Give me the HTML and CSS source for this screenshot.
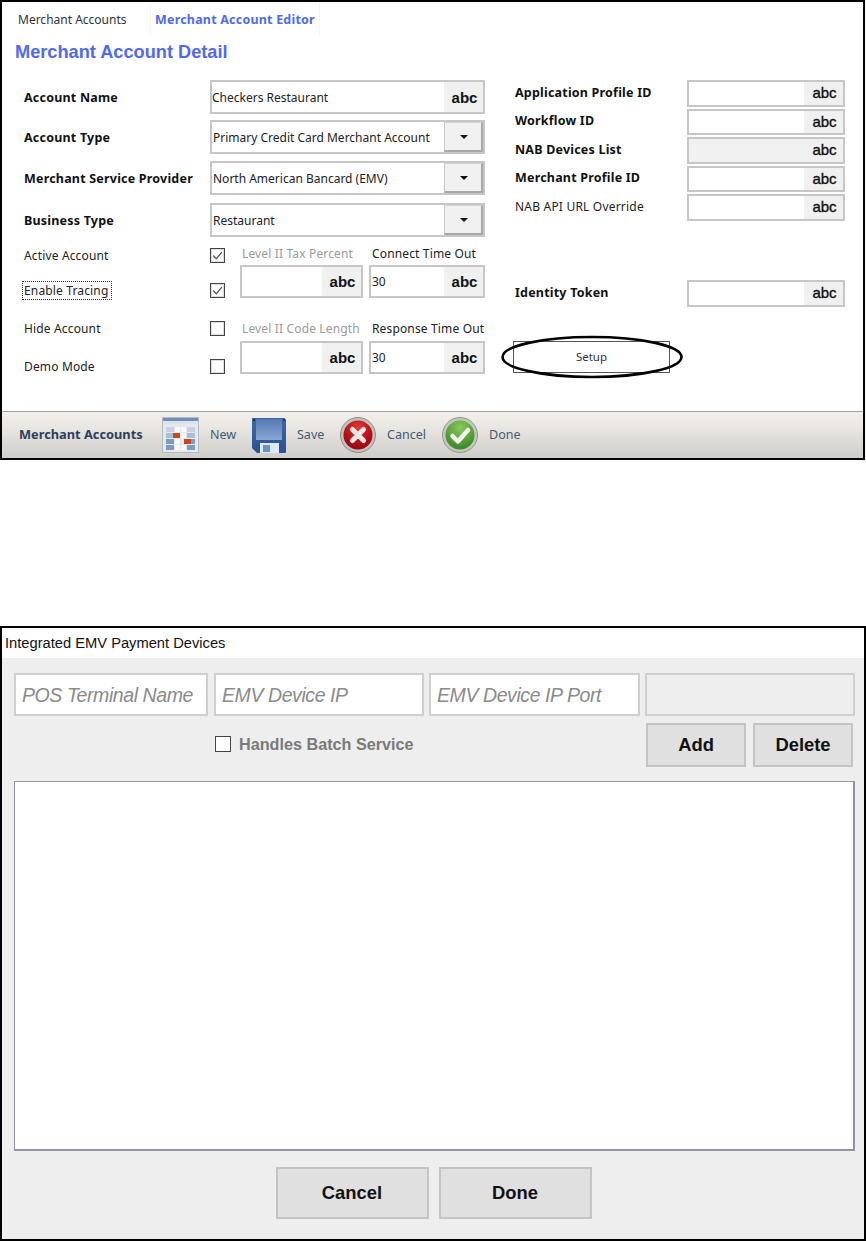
FILE: index.html
```html
<!DOCTYPE html>
<html lang="en">
<head>
<meta charset="utf-8">
<title>Merchant Account Detail</title>
<link rel="stylesheet" href="styles.css">
</head>
<body>
<section class="panel-top">
  <nav class="tabs">
    <div class="tab tab-first">Merchant Accounts</div>
    <div class="tab tab-active">Merchant Account Editor</div>
  </nav>
  <h1 class="heading">Merchant Account Detail</h1>
  <div class="form">
    <div class="left">
      <div class="row row-a"><span class="label bold">Account Name</span><div class="field"><span class="value">Checkers Restaurant</span><span class="tail abc">abc</span></div></div>
      <div class="row row-b"><span class="label bold">Account Type</span><div class="field"><span class="value wide">Primary Credit Card Merchant Account</span><span class="drop"><i class="caret"></i></span></div></div>
      <div class="row row-c"><span class="label bold">Merchant Service Provider</span><div class="field"><span class="value wide">North American Bancard (EMV)</span><span class="drop"><i class="caret"></i></span></div></div>
      <div class="row"><span class="label bold">Business Type</span><div class="field"><span class="value wide">Restaurant</span><span class="drop"><i class="caret"></i></span></div></div>
      <div class="lower">
        <div class="checks">
          <div class="check-row"><span class="label">Active Account</span><span class="box"><svg viewBox="0 0 15 15" class="tick"><path d="M2.5 7.5l3.6 3.8L12.5 3.6"/></svg></span></div>
          <div class="check-row"><span class="label-focus">Enable Tracing</span><span class="box"><svg viewBox="0 0 15 15" class="tick"><path d="M2.5 7.5l3.6 3.8L12.5 3.6"/></svg></span></div>
          <div class="check-row"><span class="label">Hide Account</span><span class="box"></span></div>
          <div class="check-row"><span class="label">Demo Mode</span><span class="box"></span></div>
        </div>
        <div class="small-fields">
          <div class="stack"><span class="cap muted">Level II Tax Percent</span><div class="field small"><span class="value"></span><span class="tail abc">abc</span></div></div>
          <div class="stack"><span class="cap">Connect Time Out</span><div class="field small"><span class="value">30</span><span class="tail abc">abc</span></div></div>
          <div class="stack"><span class="cap muted">Level II Code Length</span><div class="field small"><span class="value"></span><span class="tail abc">abc</span></div></div>
          <div class="stack"><span class="cap">Response Time Out</span><div class="field small"><span class="value">30</span><span class="tail abc">abc</span></div></div>
        </div>
      </div>
    </div>
    <div class="right">
      <div class="rrow"><span class="rlabel bold">Application Profile ID</span><div class="field"><span class="value"></span><span class="tail abc-r">abc</span></div></div>
      <div class="rrow"><span class="rlabel bold">Workflow ID</span><div class="field"><span class="value"></span><span class="tail abc-r">abc</span></div></div>
      <div class="rrow"><span class="rlabel bold">NAB Devices List</span><div class="field disabled"><span class="value"></span><span class="tail abc-r">abc</span></div></div>
      <div class="rrow"><span class="rlabel bold">Merchant Profile ID</span><div class="field"><span class="value"></span><span class="tail abc-r">abc</span></div></div>
      <div class="rrow"><span class="rlabel">NAB API URL Override</span><div class="field"><span class="value"></span><span class="tail abc-r">abc</span></div></div>
      <div class="rrow identity"><span class="rlabel bold">Identity Token</span><div class="field"><span class="value"></span><span class="tail abc-r">abc</span></div></div>
      <div class="setup">Setup
        <svg class="ring" viewBox="0 0 182 44"><ellipse cx="91" cy="22" rx="89.5" ry="20"/></svg>
      </div>
    </div>
  </div>
  <footer class="toolbar">
    <span class="tool-title">Merchant Accounts</span>
    <svg class="icon i-new" viewBox="0 0 37 36">
      <rect x=".5" y=".5" width="36" height="35" fill="#e6e8ec" stroke="#b4bac2"/>
      <rect x="1" y="1" width="35" height="3" fill="#6f8db6"/>
      <rect x="1" y="4" width="35" height="3" fill="#dbe2ec"/>
      <g fill="#7d9cc2">
        <rect x="4" y="10" width="8" height="5" fill="#c3d1e2"/><rect x="25" y="10" width="8" height="5" fill="#c3d1e2"/>
        <rect x="4" y="16" width="8" height="5" fill="#a9bed8"/><rect x="25" y="16" width="8" height="5" fill="#a9bed8"/>
        <rect x="4" y="22" width="8" height="5"/><rect x="25" y="22" width="8" height="5"/>
        <rect x="4" y="28" width="8" height="5"/><rect x="25" y="28" width="8" height="5"/>
      </g>
      <g fill="#f8f8f8">
        <rect x="13" y="10" width="5" height="5"/><rect x="19" y="10" width="5" height="5"/>
        <rect x="19" y="16" width="5" height="5"/><rect x="13" y="22" width="5" height="5"/>
        <rect x="13" y="28" width="5" height="5"/><rect x="19" y="28" width="5" height="5"/>
      </g>
      <rect x="11" y="16" width="7" height="5" fill="#c9481f"/>
      <rect x="22" y="22" width="7" height="5" fill="#c9481f"/>
    </svg>
    <span class="tool-label l-new">New</span>
    <svg class="icon i-save" viewBox="0 0 34 36">
      <defs>
        <linearGradient id="fl" x1="0" y1="0" x2="0" y2="1"><stop offset="0" stop-color="#3f66a3"/><stop offset="1" stop-color="#2c5296"/></linearGradient>
        <linearGradient id="fi" x1="0" y1="0" x2="0" y2="1"><stop offset="0" stop-color="#5479b2"/><stop offset="1" stop-color="#8aa6d2"/></linearGradient>
        <radialGradient id="rd" cx=".5" cy=".25" r=".8"><stop offset="0" stop-color="#e03a3c"/><stop offset=".6" stop-color="#b50f14"/><stop offset="1" stop-color="#8c0a0e"/></radialGradient>
        <radialGradient id="gr" cx=".5" cy=".25" r=".85"><stop offset="0" stop-color="#8ac85a"/><stop offset="1" stop-color="#2f7d22"/></radialGradient>
      </defs>
      <path d="M0 1h32.5l1.5 1.5V35a1 1 0 0 1-1 1H5l-5-5z" fill="url(#fl)"/>
      <rect x="4" y="2" width="26" height="21" fill="url(#fi)"/>
      <rect x="1" y="2" width="2" height="2" fill="#1d3560"/><rect x="31" y="2" width="2" height="2" fill="#1d3560"/>
      <path d="M8 26h19v10H8z" fill="#dfe7f3"/>
      <rect x="11" y="28" width="7" height="7" fill="#6f90c4"/>
    </svg>
    <span class="tool-label l-save">Save</span>
    <svg class="icon i-round" viewBox="0 0 36 36">
      <circle cx="18" cy="18" r="17.5" fill="#c2bfbc" stroke="#8f8c8a"/>
      <circle cx="18" cy="18" r="14.5" fill="url(#rd)"/>
      <path d="M12.5 12.5l11 11M23.5 12.5l-11 11" stroke="#efe6e6" stroke-width="5" stroke-linecap="round" fill="none"/>
    </svg>
    <span class="tool-label l-cancel">Cancel</span>
    <svg class="icon i-round" viewBox="0 0 36 36">
      <circle cx="18" cy="18" r="17.5" fill="#c2c8bd" stroke="#8e9689"/>
      <circle cx="18" cy="18" r="14.5" fill="url(#gr)"/>
      <path d="M10.5 19l5.5 5.5L26 13" stroke="#f2f5ee" stroke-width="4.5" stroke-linecap="round" stroke-linejoin="round" fill="none"/>
    </svg>
    <span class="tool-label">Done</span>
  </footer>
</section>

<section class="panel-bottom">
  <header class="title">Integrated EMV Payment Devices</header>
  <div class="body">
    <div class="inputs">
      <div class="input i1">POS Terminal Name</div>
      <div class="input i2">EMV Device IP</div>
      <div class="input i3">EMV Device IP Port</div>
      <div class="input i4 blank"></div>
    </div>
    <div class="actions">
      <label class="batch"><span class="bbox"></span>Handles Batch Service</label>
      <button class="btn add">Add</button>
      <button class="btn del">Delete</button>
    </div>
    <div class="list"></div>
    <div class="foot">
      <button class="btn big">Cancel</button>
      <button class="btn big">Done</button>
    </div>
  </div>
</section>
</body>
</html>
```
FILE: styles.css
```css
* { box-sizing: border-box; }
html, body { margin: 0; padding: 0; background: #fff; }
body { width: 866px; height: 1242px; overflow: hidden; font-family: "Noto Sans", "Liberation Sans", sans-serif; font-size: 12px; color: #222; }

.panel-top { width: 865px; height: 460px; border: 2px solid #000; display: flex; flex-direction: column; background: #fff; }
.tabs { display: flex; height: 34px; flex: none; }
.tab { line-height: 35px; font-size: 12px; color: #333; }
.tab-first { width: 148px; padding-left: 16px; }
.tab-active { width: 170px; padding-left: 4px; font-size: 12.5px; letter-spacing: .2px; font-weight: 700; color: #4f6bea; border-left: 1px solid #f6f6f6; border-right: 1px solid #f6f6f6; }
.heading { margin: 4px 0 16px 13px; height: 24px; font: 700 18.2px/24px "Liberation Sans", sans-serif; color: #4f6bea; }

.form { display: flex; padding-left: 22px; }
.left { width: 461px; flex: none; }
.right { width: 330px; margin-left: 30px; flex: none; display: flex; flex-direction: column; }

.row { display: flex; align-items: center; height: 34px; margin-bottom: 8px; }
.row-a { margin-bottom: 6px; }
.row-b { margin-bottom: 7px; }
.row-c { margin-bottom: 8px; }
.label { width: 186px; flex: none; font-size: 12px; letter-spacing: .15px; color: #222; }
.label.bold, .rlabel.bold { font-size: 12.5px; letter-spacing: .2px; font-weight: 700; color: #111; }
.row .field { flex: 1; height: 34px; }

.field { display: flex; align-items: stretch; border: 2px solid #c6c6c6; background: #fff; min-width: 0; }
.value { flex: 1; display: flex; align-items: center; font-size: 12px; color: #222; white-space: nowrap; overflow: hidden; }
.value.wide { padding-left: 1px; }
.tail { width: 39px; flex: none; display: flex; align-items: center; justify-content: center; padding-left: 2px; background: #f0f0f0; color: #111; font-family: "Liberation Sans", sans-serif; }
.abc { font-size: 15px; font-weight: 700; }
.abc-r { font-size: 15px; font-weight: 400; padding-bottom: 1px; -webkit-text-stroke: .35px #111; }
.disabled { background: #f0f0f0; }
.drop { width: 39px; flex: none; display: flex; align-items: center; justify-content: center; padding-left: 1px; background: #f0f0f0; border-style: solid; border-width: 1px 2px 2px 1px; border-color: #d4d4d4 #a8a8a8 #a8a8a8 #c8c8c8; }
.caret { width: 0; height: 0; border-left: 4px solid transparent; border-right: 4px solid transparent; border-top: 4px solid #111; }

.lower { display: flex; margin-top: 11px; }
.checks { width: 201px; flex: none; display: flex; flex-direction: column; gap: 23px; }
.check-row { display: flex; align-items: center; height: 15px; position: relative; }
.check-row:first-child { margin-bottom: -3px; }
.box { width: 15px; height: 15px; flex: none; border: 1px solid #444; box-shadow: inset 0 0 0 1px #ddd; background: #fff; }
.tick { display: block; width: 13px; height: 13px; }
.tick path { fill: none; stroke: #555; stroke-width: 1.5; }
.label-focus { width: 186px; flex: none; position: relative; letter-spacing: .15px; color: #222; }
.label-focus::after { content: ""; position: absolute; left: -2px; top: -1px; width: 88px; height: 17px; border: 1px dotted #333; }

.small-fields { display: grid; grid-template-columns: 123px 116px; column-gap: 6px; row-gap: 24px; margin-left: 15px; margin-top: -2px; }
.stack { display: flex; flex-direction: column; }
.cap { height: 19px; line-height: 16px; font-size: 12px; letter-spacing: .15px; color: #222; padding-left: 2px; white-space: nowrap; }
.stack:nth-child(n+3) .cap { line-height: 14px; }
.stack:nth-child(even) .cap { padding-left: 3px; }
.muted { color: #9a9a9a; }
.field.small { height: 33px; }
.small .value { padding-left: 1px; }

.rrow { display: flex; align-items: center; height: 26.5px; margin-bottom: 2px; }
.rrow .field { width: 158px; height: 26.5px; flex: none; }
.rlabel { width: 172px; flex: none; margin-top: -2px; font-size: 12px; letter-spacing: .2px; color: #222; }
.identity { margin-top: 57.5px; }
.setup { position: relative; width: 157px; height: 32px; margin: 32px 0 0 -2px; border: 1px solid #555; display: flex; align-items: center; justify-content: center; font-size: 11.5px; color: #333; }
.ring { position: absolute; left: -13px; top: -7px; width: 182px; height: 44px; overflow: visible; }
.ring ellipse { fill: none; stroke: #000; stroke-width: 2.6; }

.toolbar { margin-top: auto; height: 47px; flex: none; display: flex; align-items: center; padding-left: 17px; border-top: 1px solid #a0a0a0; background: linear-gradient(#f3f0ec, #e9e6e2 35%, #cfcdc9); }
.tool-title { width: 143px; flex: none; margin-top: -2px; font-size: 12.8px; font-weight: 700; color: #2d405e; }
.icon { flex: none; display: block; }
.i-new { width: 37px; height: 36px; }
.i-save { width: 34px; height: 36px; }
.i-round { width: 36px; height: 36px; }
.tool-label { flex: none; margin-left: 11px; margin-top: -2px; font-size: 12.5px; color: #445a72; }
.l-new { width: 31px; margin-right: 11px; }
.l-save { width: 32px; margin-right: 11px; }
.l-cancel { width: 44px; margin-right: 11px; }

.panel-bottom { width: 866px; height: 615px; margin-top: 166px; border: 2px solid #000; display: flex; flex-direction: column; font-family: "Liberation Sans", sans-serif; background: #eee; }
.title { height: 30px; flex: none; padding-left: 3px; background: #fff; color: #111; font-size: 14.7px; line-height: 30px; }
.body { flex: 1; padding: 15px 9px 0 12px; display: flex; flex-direction: column; }
.inputs { display: flex; height: 43px; flex: none; }
.input { height: 43px; border: 2px solid #cfcfcf; background: #fff; padding-left: 6px; font-style: italic; font-size: 19.5px; letter-spacing: -.42px; line-height: 40px; color: #8a8a8a; white-space: nowrap; overflow: hidden; }
.i1 { width: 194px; margin-right: 6px; }
.i2 { width: 210px; margin-right: 5px; }
.i3 { width: 211px; margin-right: 5px; }
.i4 { width: 210px; }
.blank { background: #eee; }
.actions { display: flex; height: 44px; flex: none; margin-top: 7px; align-items: flex-start; padding-left: 201px; }
.batch { display: flex; align-items: center; width: 431px; height: 16px; margin-top: 13px; color: #7a7a7a; font-size: 16.2px; font-weight: 700; }
.bbox { width: 16px; height: 16px; margin-right: 8px; border: 1px solid #444; background: #fff; flex: none; }
.btn { display: block; font-family: "Liberation Sans", sans-serif; font-weight: 700; font-size: 18.4px; color: #111; background: #e0e0e0; border: 2px solid #c4c4c4; padding: 0; }
.add, .del { width: 100px; height: 44px; }
.add { margin-right: 7px; }
.list { width: 841px; height: 370px; flex: none; margin-top: 14px; background: #fff; border: 1px solid #8f93a3; border-width: 1px 2px 2px 1px; }
.foot { display: flex; justify-content: center; gap: 10px; margin-top: 16px; padding-right: 2px; }
.big { width: 153px; height: 52px; }
```
